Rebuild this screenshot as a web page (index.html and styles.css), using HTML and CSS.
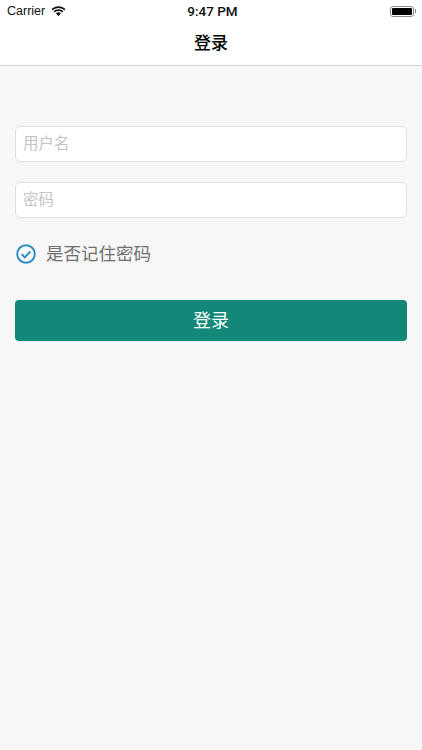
FILE: index.html
```html
<!DOCTYPE html>
<html lang="zh">
<head>
    <meta charset="UTF-8">
    <meta name="viewport" content="width=device-width, initial-scale=1.0">
    <title>登录</title>
    <link rel="stylesheet" href="styles.css">
</head>
<body>
    <header class="top-bar">
        <div class="status-bar">
            <div class="status-left">
                <span>Carrier</span>
                <svg class="wifi" width="15" height="11" viewBox="0 0 15 11">
                    <path d="M7.5 2.1c2.2 0 4.2.9 5.7 2.3l1.2-1.3C12.6 1.3 10.2.2 7.5.2S2.4 1.3.6 3.1l1.2 1.3C3.3 3 5.3 2.1 7.5 2.1z"/>
                    <path d="M7.5 5.1c1.4 0 2.6.5 3.6 1.4l1.2-1.3C11 4 9.3 3.3 7.5 3.3S4 4 2.7 5.2l1.2 1.3c1-.9 2.2-1.4 3.6-1.4z"/>
                    <path d="M7.5 6.3c-1 0-1.9.4-2.5 1l2.5 2.9L10 7.3c-.6-.6-1.5-1-2.5-1z"/>
                </svg>
            </div>
            <div class="status-time">9:47 PM</div>
            <div class="status-right">
                <div class="battery"><div class="battery-level"></div></div>
                <div class="battery-cap"></div>
            </div>
        </div>
        <div class="nav-title">登录</div>
    </header>

    <main class="login-form">
        <input type="text" class="text-input" placeholder="用户名">
        <input type="password" class="text-input password-input" placeholder="密码">
        <div class="remember-row">
            <svg class="check-icon" width="20" height="20" viewBox="0 0 20 20" fill="none">
                <circle cx="10" cy="10" r="8.8" stroke="#2b8ac6" stroke-width="1.9"/>
                <path d="M5.6 10.1l3.2 3.2 5.6-5.8" stroke="#2b8ac6" stroke-width="1.9"/>
            </svg>
            <span class="remember-label">是否记住密码</span>
        </div>
        <button class="login-button">登录</button>
    </main>
</body>
</html>
```

FILE: styles.css
```css
* {
    margin: 0;
    padding: 0;
    box-sizing: border-box;
}

html, body {
    height: 100%;
}

body {
    background-color: #f7f7f7;
    font-family: "Liberation Sans", "Noto Sans CJK SC", sans-serif;
}

.top-bar {
    background-color: #fff;
    border-bottom: 1px solid #d2d2d2;
    height: 66px;
}

.status-bar {
    height: 22px;
    padding: 0 6px 0 7px;
    display: grid;
    grid-template-columns: 1fr auto 1fr;
    align-items: center;
    font-size: 12.5px;
    color: #111;
}

.status-left {
    display: flex;
    align-items: center;
    gap: 6px;
}

.wifi {
    fill: #111;
}

.status-time {
    font-family: Roboto, "Liberation Sans", sans-serif;
    font-weight: 500;
    font-size: 13.5px;
    margin-left: 2px;
}

.status-right {
    display: flex;
    justify-content: flex-end;
    align-items: center;
}

.battery {
    width: 24px;
    height: 11px;
    border: 1px solid #8a8a8a;
    border-radius: 3px;
    padding: 1px;
}

.battery-level {
    height: 100%;
    background-color: #000;
    border-radius: 1px;
}

.battery-cap {
    width: 1.5px;
    height: 4px;
    background-color: #8a8a8a;
    margin-left: 1px;
}

.nav-title {
    height: 43px;
    line-height: 43px;
    text-align: center;
    font-size: 17px;
    font-weight: 500;
    color: #000;
}

.login-form {
    padding: 60px 15px 0;
    display: flex;
    flex-direction: column;
}

.text-input {
    width: 100%;
    height: 36px;
    padding: 0 7px 1px;
    background-color: #fff;
    border: 1px solid #e0e0e0;
    border-radius: 5px;
    font-family: inherit;
    font-size: 15.5px;
    outline: none;
}

.text-input::placeholder {
    color: #c4c4c4;
    opacity: 1;
}

.password-input {
    margin-top: 20px;
}

.remember-row {
    display: flex;
    align-items: center;
    gap: 10px;
    margin-top: 16px;
    height: 40px;
    padding-left: 1px;
    font-size: 17.5px;
    color: #6f6f6f;
}

.remember-label {
    margin-bottom: 3px;
}

.login-button {
    margin-top: 26px;
    height: 41px;
    padding-bottom: 4px;
    background-color: #138778;
    color: #fff;
    border: none;
    border-radius: 4px;
    font-family: inherit;
    font-size: 18px;
    cursor: pointer;
}
```
